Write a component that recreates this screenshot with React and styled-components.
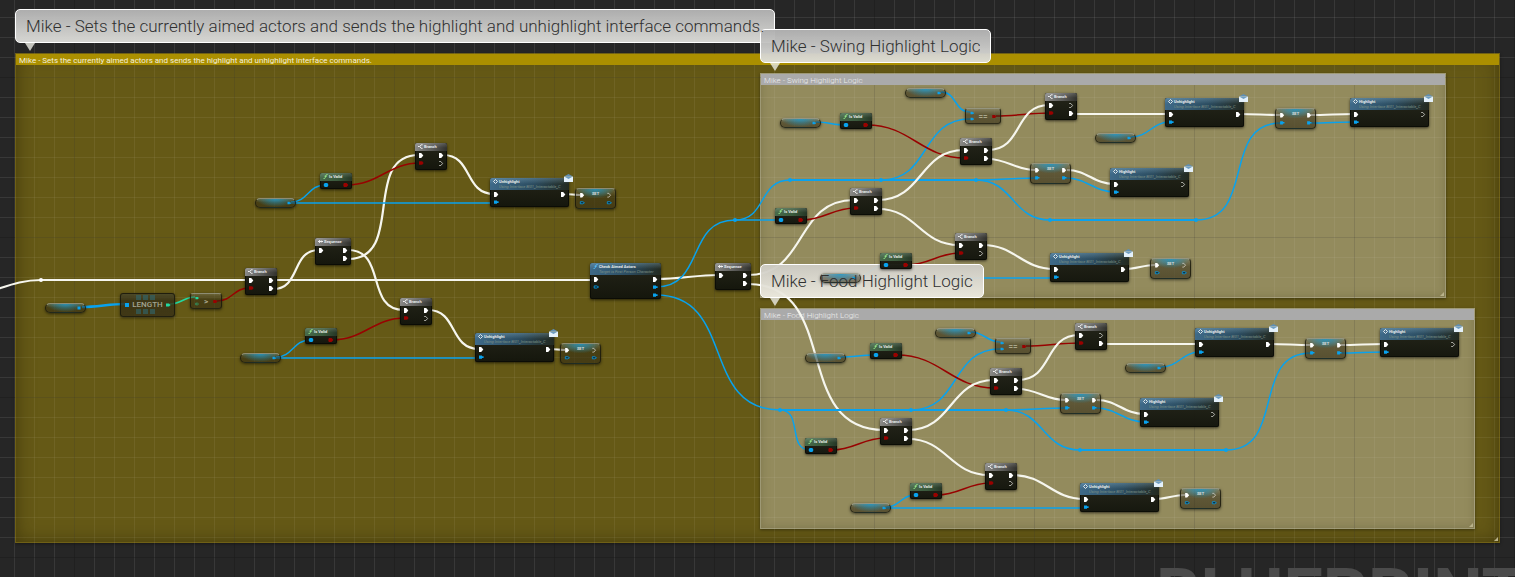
import React from "react";
import styled, { createGlobalStyle, css } from "styled-components";

const GlobalStyle = createGlobalStyle`
  body {
    margin: 0;
    background: #262626;
    font-family: Roboto, "Liberation Sans", sans-serif;
  }
`;

const Graph = styled.main`
  position: relative;
  width: 100%;
  min-height: 100vh;
  overflow: hidden;
  background: #262626;
`;

const Grid = styled.div`
  position: absolute;
  inset: 0;
  z-index: ${(p) => (p.$soft ? 1 : 0)};
  pointer-events: none;
  background-image: linear-gradient(90deg, var(--major) 1px, transparent 1px),
    linear-gradient(var(--major) 1px, transparent 1px),
    linear-gradient(90deg, var(--minor) 1px, transparent 1px),
    linear-gradient(var(--minor) 1px, transparent 1px);
  background-size: 160px 160px, 160px 160px, 20px 20px, 20px 20px;
  background-position: 74px 0, 0 77px, 14px 0, 0 17px;
  --major: rgba(0, 0, 0, ${(p) => (p.$soft ? 0.14 : 0.45)});
  --minor: rgba(255, 255, 255, ${(p) => (p.$soft ? 0.05 : 0.03)});
`;

const Watermark = styled.div`
  position: absolute;
  right: -10px;
  bottom: -58px;
  z-index: 1;
  color: #4b4b4b;
  font-size: 70px;
  font-weight: 700;
  line-height: 82px;
`;

const Frame = styled.section`
  position: absolute;
  left: ${(p) => p.$x}px;
  top: ${(p) => p.$y}px;
  width: ${(p) => p.$w}px;
  height: ${(p) => p.$h}px;
  box-sizing: border-box;
  border: 1px solid ${(p) => (p.$gold ? "rgba(112, 96, 22, 0.9)" : "rgba(160, 154, 120, 0.9)")};
  background: ${(p) => (p.$gold ? "rgba(116, 101, 20, 0.82)" : "rgba(176, 170, 137, 0.62)")};
  box-shadow: inset 0 0 ${(p) => (p.$gold ? "18px rgba(40, 32, 0, 0.55)" : "8px rgba(90, 84, 50, 0.35)")},
    0 1px 3px rgba(0, 0, 0, 0.4);
`;

const FrameTitle = styled.h2`
  position: relative;
  z-index: 2;
  margin: 0;
  height: 11px;
  padding: 1px 3px 0;
  box-sizing: border-box;
  background: ${(p) => (p.$gold ? "#ab8f00" : "#aaaaaa")};
  color: ${(p) => (p.$gold ? "#f4f0dc" : "#eeeeee")};
  font-size: 8px;
  line-height: 11px;
  font-weight: ${(p) => (p.$gold ? 400 : 300)};
  white-space: nowrap;
`;

const Resizer = styled.svg`
  position: absolute;
  right: 1px;
  bottom: 1px;
  width: 4px;
  height: 4px;
  fill: #b9b28a;
`;

const Bubble = styled.div`
  position: absolute;
  left: ${(p) => p.$x}px;
  top: ${(p) => p.$y}px;
  height: 34px;
  box-sizing: border-box;
  padding: 7px 11px;

  &::before {
    content: "";
    position: absolute;
    inset: 0;
    z-index: 3;
    box-sizing: border-box;
    border: 1px solid #ffffff;
    border-radius: 5px;
    background: linear-gradient(
      ${(p) => (p.$light ? "rgba(205, 203, 196, 0.96), rgba(238, 236, 226, 0.94)" : "rgba(176, 176, 176, 0.98), rgba(224, 224, 220, 0.94)")}
    );
  }

  &::after {
    content: "";
    position: absolute;
    left: 10px;
    top: 34px;
    z-index: 3;
    border: 5px solid transparent;
    border-top: 8px solid rgba(236, 236, 228, 0.8);
    border-bottom: 0;
  }
`;

const BubbleText = styled.p`
  position: relative;
  z-index: 5;
  margin: 0;
  height: 19px;
  overflow: hidden;
  color: #303030;
  font-size: 17px;
  font-weight: 300;
  line-height: 20px;
  white-space: nowrap;
`;

const Wires = styled.svg`
  position: absolute;
  inset: 0;
  z-index: 2;
  width: 100%;
  height: 100%;
  fill: none;
`;

const headTone = {
  flow: css`
    background: linear-gradient(rgba(255, 255, 255, 0.16), transparent 60%),
      linear-gradient(100deg, #8c8c8a, #5c5c59 55%, #30302b);
  `,
  pure: css`
    background: linear-gradient(rgba(255, 255, 255, 0.16), transparent 60%),
      linear-gradient(100deg, #486b4c, #3b5a3c 55%, #253525);
  `,
  call: css`
    background: linear-gradient(rgba(160, 200, 220, 0.3), transparent 50%),
      linear-gradient(100deg, #3f6b8a, #2b4c60 55%, #23291f);
  `,
};

const NodeBox = styled.article`
  position: absolute;
  z-index: 4;
  left: ${(p) => p.$x}px;
  top: ${(p) => p.$y}px;
  width: ${(p) => p.$w}px;
  height: ${(p) => p.$h}px;
  box-sizing: border-box;
  border-radius: 2px;
  background: linear-gradient(rgba(34, 35, 25, 0.97), rgba(18, 20, 12, 0.97));
  box-shadow: inset 0 0 0 1px rgba(8, 10, 4, 0.75), 0 1px 3px rgba(0, 0, 0, 0.65);
`;

const NodeHead = styled.header`
  display: flex;
  gap: 1px;
  height: ${(p) => (p.$tall ? 12 : 8)}px;
  padding: 1px 3px 0;
  box-sizing: border-box;
  border-radius: 2px 2px 0 0;
  overflow: hidden;
  ${(p) => headTone[p.$tone]}
`;

const NodeTitle = styled.h3`
  margin: 0;
  color: #e9ecec;
  font-size: 4px;
  font-weight: 700;
  line-height: 5px;
  white-space: nowrap;
`;

const NodeNote = styled.p`
  margin: 0;
  color: #7d9186;
  font-size: 4px;
  font-style: italic;
  line-height: 5px;
  white-space: nowrap;
`;

const HeadIcon = styled.svg`
  flex: none;
  width: 5px;
  height: 5px;
`;

const Pins = styled.div`
  display: flex;
  justify-content: space-between;
  padding: 0 3px;
`;

const PinColumn = styled.div`
  display: flex;
  flex-direction: column;
  justify-content: ${(p) => (p.$center ? "center" : "flex-start")};
`;

const PinCell = styled.svg`
  display: block;
  width: 6px;
  height: ${(p) => p.$h || 8}px;
`;

const SoftBox = styled.article`
  position: absolute;
  z-index: 4;
  left: ${(p) => p.$x}px;
  top: ${(p) => p.$y}px;
  width: ${(p) => p.$w}px;
  height: ${(p) => p.$h}px;
  display: flex;
  justify-content: space-between;
  box-sizing: border-box;
  padding: ${(p) => p.$pad || 1}px 3px;
  border: 1px solid rgba(24, 24, 12, 0.8);
  border-top-color: rgba(190, 195, 180, 0.6);
  border-radius: ${(p) => p.$r}px;
  background: ${(p) => p.$glow && `radial-gradient(ellipse 50% ${p.$glow} at 50% 0, rgba(30, 150, 200, 0.85), transparent),`}
    linear-gradient(rgba(110, 110, 92, 0.45), rgba(44, 38, 18, 0.5) 40%, rgba(50, 42, 20, 0.6));
  box-shadow: 0 1px 3px rgba(0, 0, 0, 0.55);
`;

const SoftLabel = styled.span`
  color: ${(p) => (p.$dim ? "#a9a78c" : "#d8dedb")};
  font-size: ${(p) => p.$size}px;
  line-height: ${(p) => p.$line}px;
  font-weight: 700;
`;

const LengthBox = styled(SoftBox)`
  align-items: center;
  border-top-color: rgba(24, 24, 12, 0.8);
  background: linear-gradient(rgba(70, 68, 44, 0.8), rgba(52, 46, 22, 0.8) 30%, rgba(58, 50, 22, 0.85));
`;

const LengthLabel = styled.span`
  position: relative;
  color: #a3a592;
  font-size: 8px;
  line-height: 24px;
  font-weight: 500;
`;

const ArrayMark = styled.svg`
  position: absolute;
  left: 4px;
  top: 2px;
  width: 20px;
  height: 20px;
  fill: rgba(48, 104, 112, 0.6);
`;

const Mail = styled.svg`
  position: absolute;
  right: -4px;
  top: -4px;
  width: 9px;
  height: 8px;
`;

const BLUE = "#08a2ee";
const RED = "#980200";
const GREEN = "#22d9a0";

function Pin({ kind, h }) {
  const shapes = {
    exec: <path d="M1 2h2.2L5.3 4.5 3.2 7H1z" fill="#fff" />,
    execOpen: <path d="M1.2 2.5h1.6L4.6 4.5 2.8 6.5H1.2" fill="none" stroke="#d8d8d2" strokeWidth=".8" />,
    obj: <path d="M1 2.4h3v.9h1.6v1.6H4v.9H1z" fill={BLUE} />,
    objOpen: <path d="M1.2 2.9h2.6L5.6 4 3.8 5.1H1.2z" fill="#0b2430" stroke={BLUE} strokeWidth=".8" />,
    bool: <path d="M1 2.3h3.2L5.6 4 4.2 5.7H1z" fill={RED} />,
    dot: <path d="M1.8 2h2.4l1 1v2l-1 1H1.8l-1-1V3z" fill={BLUE} />,
    redDot: <path d="M1 2h2.6L5.4 4 3.6 6H1l-.6-1V3z" fill={RED} />,
    int: <path d="M1 2.5h3L5.6 4 4 5.5H1z" fill={GREEN} />,
    intOpen: <path d="M1.3 2.9h2.4L5 4 3.7 5.1H1.3z" fill="none" stroke={GREEN} strokeWidth=".7" />,
    array: <path d="M1 2h4v4H1z" fill={BLUE} />,
  };
  return (
    <PinCell $h={h} viewBox="0 0 6 8" aria-hidden="true">
      {shapes[kind]}
    </PinCell>
  );
}

function Column({ kinds, h, center }) {
  return (
    <PinColumn $center={center}>
      {kinds.map((k, i) => (
        <Pin key={i} kind={k} h={h} />
      ))}
    </PinColumn>
  );
}

const icons = {
  branch: <path d="M0 2.5h1.6M4.6.8H3.2L1.8 2.5l1.4 1.8h1.4" fill="none" stroke="#f0f0f0" />,
  sequence: <path d="M0 2.5h5M1.6 1v3M3.6 1.6v1.8" fill="none" stroke="#f0f0f0" />,
  pure: <path d="M4.6.5C3 .2 2.9 1.4 2.5 2.6 2.2 4 2 4.9.5 4.6M1.5 2.2h2.3" fill="none" stroke="#9af08c" strokeWidth=".9" />,
  func: <path d="M4.6.5C3 .2 2.9 1.4 2.5 2.6 2.2 4 2 4.9.5 4.6M1.5 2.2h2.3" fill="none" stroke="#58c2ff" strokeWidth=".9" />,
  event: <path d="M2.5.5l2 2-2 2-2-2z" fill="none" stroke="#f0f4f6" strokeWidth=".9" />,
};

function Node({ x, y, w, h, tone, icon, title, note, ins, outs, mail }) {
  return (
    <NodeBox $x={x} $y={y} $w={w} $h={h}>
      <NodeHead $tone={tone} $tall={!!note}>
        <HeadIcon viewBox="0 0 5 5" aria-hidden="true">
          {icons[icon]}
        </HeadIcon>
        <div>
          <NodeTitle>{title}</NodeTitle>
          {note && <NodeNote>{note}</NodeNote>}
        </div>
      </NodeHead>
      <Pins>
        <Column kinds={ins} />
        <Column kinds={outs} />
      </Pins>
      {mail && (
        <Mail viewBox="0 0 9 8" aria-hidden="true">
          <path d="M0 2.6 4.5 0 9 2.6z" fill="#5f8fb5" />
          <path d="M0 2.6h9V8H0z" fill="#e4f1fb" />
          <path d="M.5 2.8 4.5 5l4-2.2z" fill="#6d9dc2" />
        </Mail>
      )}
    </NodeBox>
  );
}

const Branch = ({ x, y, outs = ["exec", "exec"] }) => (
  <Node x={x} y={y} w={32} h={27} tone="flow" icon="branch" title="Branch" ins={["exec", "bool"]} outs={outs} />
);
const Sequence = ({ x, y }) => (
  <Node x={x} y={y} w={36} h={27} tone="flow" icon="sequence" title="Sequence" ins={["exec"]} outs={["exec", "exec"]} />
);
const IsValid = ({ x, y }) => (
  <Node x={x} y={y} w={32} h={16} tone="pure" icon="pure" title="Is Valid" ins={["dot"]} outs={["redDot"]} />
);
const Message = ({ x, y, title, end = "exec" }) => (
  <Node
    x={x}
    y={y}
    w={79}
    h={29}
    tone="call"
    icon="event"
    title={title}
    note="Using Interface BI01_Interactable_C"
    ins={["exec", "obj"]}
    outs={[end]}
    mail
  />
);
const Variable = ({ x, y, kind = "obj" }) => (
  <SoftBox $x={x} $y={y} $w={41} $h={10} $r={5} $glow="100%">
    <span />
    <Column kinds={[kind]} h={8} center />
  </SoftBox>
);
const SetNode = ({ x, y, live }) => {
  const obj = live ? "obj" : "objOpen";
  return (
    <SoftBox $x={x} $y={y} $w={41} $h={21} $r={4} $pad={2} $glow="50%">
      <Column kinds={["exec", obj]} />
      <SoftLabel $size={4} $line={5}>
        SET
      </SoftLabel>
      <Column kinds={[live ? "exec" : "execOpen", obj]} />
    </SoftBox>
  );
};
const Compare = ({ x, y, w = 36, sign, ins }) => (
  <SoftBox $x={x} $y={y} $w={w} $h={16} $r={3} $glow="0%">
    <Column kinds={ins} h={7} />
    <SoftLabel $size={8} $line={13} $dim>
      {sign}
    </SoftLabel>
    <Column kinds={["bool"]} h={7} center />
  </SoftBox>
);

const wireStyle = {
  exec: { stroke: "#f6f6ee", strokeWidth: 2.2 },
  obj: { stroke: BLUE, strokeWidth: 1.5 },
  trunk: { stroke: BLUE, strokeWidth: 2 },
  array: { stroke: BLUE, strokeWidth: 2.4 },
  bool: { stroke: RED, strokeWidth: 1.5 },
  int: { stroke: GREEN, strokeWidth: 1.4 },
};

/* Horizontal tangents a third of the total travel long, so tall links bulge outwards. */
function curve([, x1, y1, x2, y2]) {
  const t = Math.round((Math.abs(x2 - x1) + Math.abs(y2 - y1)) / 3);
  return `M${x1} ${y1}C${x1 + t} ${y1} ${x2 - t} ${y2} ${x2} ${y2}`;
}

const mainWires = [
  ["exec", -40, 296, 41, 280],
  ["exec", 41, 280, 249, 280],
  ["exec", 273, 280, 594, 280],
  ["exec", 273, 289, 319, 250],
  ["exec", 348, 250, 404, 310],
  ["exec", 348, 259, 419, 155],
  ["exec", 443, 155, 494, 194],
  ["exec", 565, 194, 580, 195],
  ["exec", 428, 310, 479, 349],
  ["exec", 550, 349, 565, 350],
  ["exec", 657, 279, 719, 275],
  ["exec", 748, 275, 854, 200],
  ["exec", 748, 284, 884, 430],
  ["array", 82, 307, 125, 304],
  ["int", 170, 304, 195, 297],
  ["bool", 217, 301, 249, 288],
  ["obj", 291, 202, 325, 185],
  ["obj", 291, 203, 495, 203],
  ["bool", 347, 185, 420, 163],
  ["obj", 276, 357, 310, 340],
  ["obj", 276, 358, 480, 358],
  ["bool", 332, 340, 405, 318],
  ["obj", 656, 287, 735, 220],
  ["obj", 656, 295, 780, 410],
  ["obj", 735, 220, 790, 180],
  ["obj", 735, 220, 780, 220],
  ["obj", 780, 410, 810, 450],
  ["trunk", 780, 410, 911, 410],
  ["trunk", 790, 180, 881, 180],
  ["obj", 816, 122, 845, 125],
  ["obj", 941, 92, 970, 112],
  ["obj", 841, 357, 875, 355],
  ["obj", 971, 332, 1000, 342],
];

const logicWires = [
  ["trunk", 881, 180, 976, 180],
  ["obj", 881, 180, 970, 119],
  ["obj", 976, 180, 1036, 178],
  ["obj", 976, 180, 1050, 220],
  ["trunk", 1050, 220, 1196, 220],
  ["obj", 1196, 220, 1281, 123],
  ["obj", 1311, 123, 1355, 122],
  ["obj", 1066, 178, 1115, 192],
  ["obj", 1131, 137, 1170, 122],
  ["obj", 856, 277, 885, 265],
  ["obj", 856, 278, 1055, 278],
  ["bool", 867, 125, 965, 158],
  ["bool", 802, 220, 855, 208],
  ["bool", 907, 265, 960, 253],
  ["bool", 996, 116, 1050, 113],
  ["exec", 878, 200, 964, 150],
  ["exec", 878, 209, 959, 245],
  ["exec", 988, 150, 1049, 105],
  ["exec", 988, 159, 1035, 170],
  ["exec", 1067, 170, 1114, 184],
  ["exec", 1073, 114, 1169, 114],
  ["exec", 1240, 114, 1280, 115],
  ["exec", 1311, 115, 1354, 114],
  ["exec", 983, 245, 1054, 269],
  ["exec", 1125, 269, 1155, 265],
];

const logicKnots = [
  [881, 180],
  [976, 180],
  [1050, 220],
  [1196, 220],
];

const SHIFT = { x: 30, y: 230 };

const shifted = ([kind, x1, y1, x2, y2]) => [kind, x1 + SHIFT.x, y1 + SHIFT.y, x2 + SHIFT.x, y2 + SHIFT.y];

const wires = [...mainWires, ...logicWires, ...logicWires.map(shifted)];
const knots = [
  [735, 220],
  [790, 180],
  [780, 410],
  ...logicKnots,
  ...logicKnots.map(([x, y]) => [x + SHIFT.x, y + SHIFT.y]),
];

function LogicNodes({ x = 0, y = 0 }) {
  return (
    <>
      <Compare x={965 + x} y={108 + y} sign="==" ins={["obj", "obj"]} />
      <Branch x={1045 + x} y={93 + y} outs={["execOpen", "exec"]} />
      <Branch x={960 + x} y={138 + y} />
      <Branch x={850 + x} y={188 + y} />
      <Branch x={955 + x} y={233 + y} outs={["exec", "execOpen"]} />
      <IsValid x={840 + x} y={113 + y} />
      <IsValid x={775 + x} y={208 + y} />
      <IsValid x={880 + x} y={253 + y} />
      <Variable x={1095 + x} y={133 + y} />
      <Variable x={820 + x} y={273 + y} />
      <Message x={1165 + x} y={98 + y} title="Unhighlight" />
      <Message x={1350 + x} y={98 + y} title="Highlight" end="execOpen" />
      <Message x={1110 + x} y={168 + y} title="Highlight" end="execOpen" />
      <Message x={1050 + x} y={253 + y} title="Unhighlight" />
      <SetNode x={1275 + x} y={108 + y} live />
      <SetNode x={1030 + x} y={163 + y} live />
      <SetNode x={1150 + x} y={258 + y} />
    </>
  );
}

function Comment({ x, y, w, h, gold, title }) {
  return (
    <Frame $x={x} $y={y} $w={w} $h={h} $gold={gold}>
      <FrameTitle $gold={gold}>{title}</FrameTitle>
      <Resizer viewBox="0 0 4 4" aria-hidden="true">
        <path d="M4 0v4H0z" />
      </Resizer>
    </Frame>
  );
}

function Callout({ x, y, light, children }) {
  return (
    <Bubble $x={x} $y={y} $light={light}>
      <BubbleText>{children}</BubbleText>
    </Bubble>
  );
}

const MAIN = "Mike - Sets the currently aimed actors and sends the highlight and unhighlight interface commands.";
const SWING = "Mike - Swing Highlight Logic";
const FOOD = "Mike - Food Highlight Logic";

export default function App() {
  return (
    <Graph>
      <GlobalStyle />
      <Grid />
      <Comment x={15} y={53} w={1485} h={490} gold title={MAIN} />
      <Comment x={760} y={73} w={686} h={225} title={SWING} />
      <Comment x={760} y={308} w={715} h={221} title={FOOD} />
      <Grid $soft />
      <Watermark>BLUEPRINT</Watermark>

      <Wires aria-hidden="true">
        {wires.map((w, i) => (
          <path key={i} d={curve(w)} {...wireStyle[w[0]]} />
        ))}
        {knots.map(([x, y]) => (
          <circle key={`${x}-${y}`} cx={x} cy={y} r="2" fill={BLUE} />
        ))}
        <circle cx="41" cy="280" r="2" fill="#fff" />
      </Wires>

      <Callout x={15} y={9}>{MAIN}</Callout>
      <Callout x={760} y={29}>{SWING}</Callout>
      <Callout x={760} y={264} light>{FOOD}</Callout>

      <Variable x={45} y={303} kind="array" />
      <LengthBox $x={120} $y={293} $w={55} $h={24} $r={3}>
        <Pin kind="array" />
        <LengthLabel>
          <ArrayMark viewBox="0 0 20 20" aria-hidden="true">
            <path d="M0 0h5v5H0zM7 0h5v5H7zM14 0h5v5h-5zM0 14h5v5H0zM7 14h5v5H7zM14 14h5v5h-5z" />
          </ArrayMark>
          LENGTH
        </LengthLabel>
        <Pin kind="int" />
      </LengthBox>
      <Compare x={190} y={293} w={32} sign="&gt;" ins={["int", "intOpen"]} />
      <Branch x={245} y={268} />
      <Sequence x={315} y={238} />

      <Variable x={255} y={198} />
      <IsValid x={320} y={173} />
      <Branch x={415} y={143} outs={["exec", "execOpen"]} />
      <Message x={490} y={178} title="Unhighlight" />
      <SetNode x={575} y={188} />

      <Variable x={240} y={353} />
      <IsValid x={305} y={328} />
      <Branch x={400} y={298} outs={["exec", "execOpen"]} />
      <Message x={475} y={333} title="Unhighlight" />
      <SetNode x={560} y={343} />

      <Node
        x={590}
        y={263}
        w={71}
        h={36}
        tone="call"
        icon="func"
        title="Check Aimed Actors"
        note="Target is First Person Character"
        ins={["exec", "objOpen"]}
        outs={["exec", "obj", "obj"]}
      />
      <Sequence x={715} y={263} />

      <Variable x={780} y={118} />
      <Variable x={905} y={88} />
      <LogicNodes />

      <Variable x={805} y={353} />
      <Variable x={935} y={328} />
      <LogicNodes x={SHIFT.x} y={SHIFT.y} />
    </Graph>
  );
}
